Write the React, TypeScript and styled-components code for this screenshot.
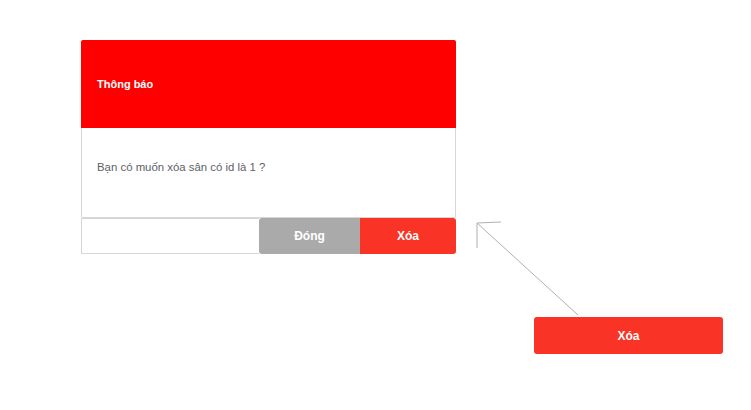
import React from "react";
import styled, { createGlobalStyle } from "styled-components";

const GlobalStyle = createGlobalStyle`
  html, body {
    margin: 0;
    padding: 0;
    background: #ffffff;
    font-family: "Liberation Sans", Arial, sans-serif;
  }
`;

const Page = styled.div`
  position: relative;
  width: 751px;
  height: 410px;
  padding: 40px 0 0 81px;
  box-sizing: border-box;
`;

const ModalBx = styled.div`
  width: 375px;
  display: flex;
  flex-direction: column;
`;

const ModalHeader = styled.div`
  height: 88px;
  background-color: #ff0000;
  border-radius: 2px 2px 0 0;
  display: flex;
  align-items: center;
  padding-left: 16px;
  color: #ffffff;
  font-weight: bold;
  font-size: 11px;
`;

const ModalBody = styled.div`
  height: 90px;
  box-sizing: border-box;
  border: 1px solid #d6d6d6;
  border-top: none;
  border-radius: 0 0 2px 2px;
  padding: 32px 15px 0;
  color: #5c6069;
  font-size: 11.4px;
  line-height: 14px;
`;

const Footer = styled.div`
  display: flex;
  height: 36px;
`;

const Filler = styled.div`
  flex: 1;
  border: 1px solid #d6d6d6;
  border-right: none;
`;

const FooterBtn = styled.button<{ $variant: "close" | "delete" }>`
  width: ${(p) => (p.$variant === "close" ? "101px" : "96px")};
  height: 36px;
  border: none;
  margin: 0;
  padding: 0;
  background-color: ${(p) => (p.$variant === "close" ? "#aaaaaa" : "#f93325")};
  border-radius: ${(p) => (p.$variant === "close" ? "3px 0 0 3px" : "0 3px 3px 0")};
  color: #ffffff;
  font-family: "Liberation Sans", Arial, sans-serif;
  font-weight: bold;
  font-size: 12px;
  cursor: pointer;
`;

const TriggerRow = styled.div`
  margin: 63px 0 0 453px;
`;

const TriggerBtn = styled.button`
  width: 189px;
  height: 37px;
  border: none;
  border-radius: 3px;
  background-color: #f93325;
  color: #ffffff;
  font-family: "Liberation Sans", Arial, sans-serif;
  font-weight: bold;
  font-size: 12px;
  cursor: pointer;
`;

const Arrow = styled.svg`
  position: absolute;
  left: 0;
  top: 0;
  pointer-events: none;
`;

const App = () => {
  return (
    <>
      <GlobalStyle />
      <Page>
        <ModalBx>
          <ModalHeader>Thông báo</ModalHeader>
          <ModalBody>Bạn có muốn xóa sân có id là 1 ?</ModalBody>
          <Footer>
            <Filler />
            <FooterBtn $variant="close">Đóng</FooterBtn>
            <FooterBtn $variant="delete">Xóa</FooterBtn>
          </Footer>
        </ModalBx>
        <TriggerRow>
          <TriggerBtn>Xóa</TriggerBtn>
        </TriggerRow>
        <Arrow width="751" height="410">
          <g stroke="#b0b0b0" strokeWidth="1" fill="none">
            <line x1="578" y1="315" x2="477" y2="223" />
            <line x1="477" y1="223" x2="501" y2="222" />
            <line x1="477" y1="223" x2="477" y2="248" />
          </g>
        </Arrow>
      </Page>
    </>
  );
};

export default App;
